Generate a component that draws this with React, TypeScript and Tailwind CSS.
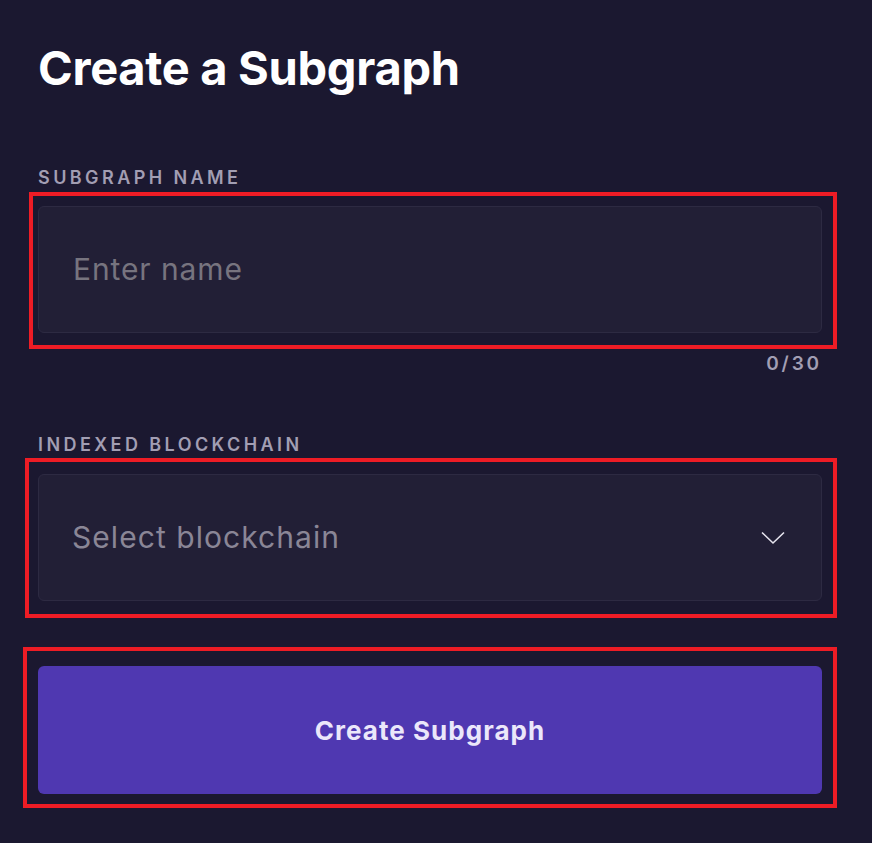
import React from "react";

function Mark({ className }: { className: string }) {
  return <div className={"pointer-events-none absolute border-4 border-[#ee1c25] " + className} />;
}

export default function App() {
  const font = { fontFamily: "Inter, 'Noto Sans', sans-serif" };
  return (
    <div className="min-h-[843px] w-full bg-[#1b1830] pl-[38px] pr-[50px] pt-[40px]" style={font}>
      <h1 className="text-[47px] font-bold leading-[56px] text-white tracking-[-0.3px]">Create a Subgraph</h1>

      <div className="mt-[70px] text-[18px] font-semibold leading-[24px] tracking-[0.19em] text-[#a29eb3]">SUBGRAPH NAME</div>
      <div className="relative mt-[16px]">
        <div className="flex h-[127px] items-center rounded-[6px] border border-[#2d2a42] bg-[#221f36] pl-[34px] text-[30px] tracking-[0.03em] text-[#77747f]">
          Enter name
        </div>
        <Mark className="-left-[9px] -top-[14px] -right-[15px] -bottom-[16px]" />
      </div>
      <div className="mt-[19px] text-right text-[19px] font-semibold leading-[24px] tracking-[0.15em] text-[#a29eb3]">0/30</div>

      <div className="mt-[57px] text-[18px] font-semibold leading-[24px] tracking-[0.19em] text-[#a29eb3]">INDEXED BLOCKCHAIN</div>
      <div className="relative mt-[17px]">
        <div className="flex h-[127px] items-center justify-between rounded-[6px] border border-[#2d2a42] bg-[#221f36] pl-[33px] pr-[36px] text-[30px] tracking-[0.035em] text-[#8a8696]">
          <span>Select blockchain</span>
          <svg width="24" height="14" viewBox="0 0 24 14" fill="none">
            <path d="M1 1.5 L12 12 L23 1.5" stroke="#e6e4ee" strokeWidth="1.6" />
          </svg>
        </div>
        <Mark className="-left-[13px] -top-[16px] -right-[15px] -bottom-[17px]" />
      </div>

      <div className="relative mt-[65px]">
        <div className="flex h-[128px] items-center justify-center rounded-[6px] bg-[#4f38b1] text-[26px] font-bold tracking-[0.04em] text-[#ebe7fa]">
          Create Subgraph
        </div>
        <Mark className="-left-[15px] -top-[19px] -right-[15px] -bottom-[14px]" />
      </div>
    </div>
  );
}
